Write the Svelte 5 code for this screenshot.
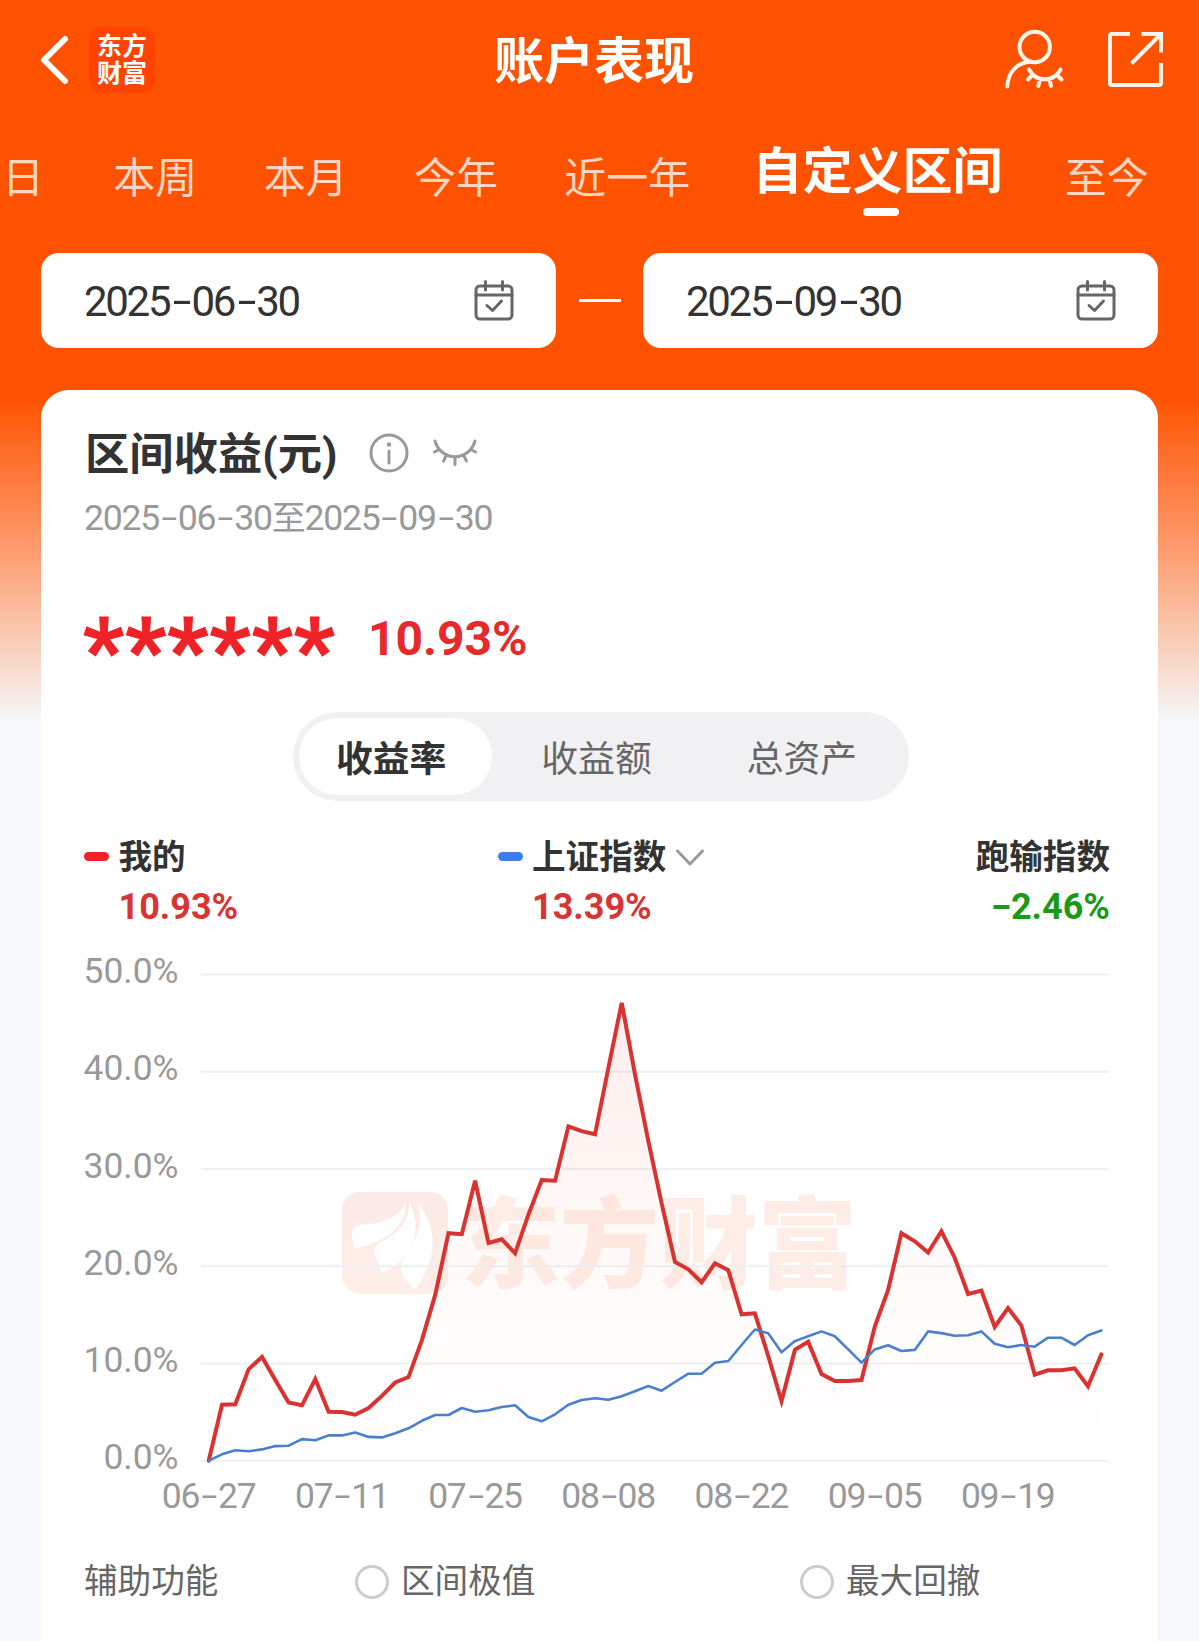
<script>
    const tabs = ["日", "本周", "本月", "今年", "近一年", "自定义区间", "至今"];
    const modes = ["收益率", "收益额", "总资产"];
    const options = ["区间极值", "最大回撤"];
    const dateLabels = ["06-27", "07-11", "07-25", "08-08", "08-22", "09-05", "09-19"];
    const levels = [50, 40, 30, 20, 10, 0];

    let activeTab = $state("自定义区间");
    let activeMode = $state("收益率");

    const mine = [
        0, 5.76, 5.8, 9.42, 10.67, 8.3, 6, 5.7, 8.4, 5.04, 5, 4.73, 5.42, 6.67, 8.04, 8.6, 12.4,
        17.05, 23.4, 23.3, 28.8, 22.4, 22.77, 21.33, 25.3, 28.87, 28.8, 34.4, 33.9, 33.57, 40.4,
        47.1, 39.75, 32.9, 26.5, 20.44, 19.69, 18.35, 20.3, 19.6, 15.06, 15.16, 10.77, 6.14, 11.4,
        12.24, 8.92, 8.2, 8.2, 8.3, 13.8, 17.56, 23.4, 22.57, 21.4, 23.6, 20.88, 17.15, 17.5,
        13.75, 15.7, 13.93, 8.85, 9.3, 9.3, 9.5, 7.65, 10.93,
    ];
    const index = [
        0, 0.66, 1.08, 0.97, 1.16, 1.5, 1.54, 2.22, 2.1, 2.6, 2.6, 2.9, 2.45, 2.4, 2.83, 3.33, 4.1,
        4.7, 4.7, 5.42, 5.04, 5.18, 5.52, 5.7, 4.5, 4.05, 4.77, 5.76, 6.24, 6.42, 6.27, 6.62, 7.14,
        7.68, 7.2, 8.1, 8.95, 8.95, 10.08, 10.25, 11.9, 13.5, 13.1, 11.15, 12.3, 12.8, 13.3, 12.8,
        11.45, 10.08, 11.45, 11.87, 11.28, 11.4, 13.3, 13.13, 12.86, 12.9, 13.3, 12.03, 11.66,
        11.9, 11.73, 12.65, 12.65, 11.9, 12.9, 13.39,
    ];

    const x = (i) => 123.7 + i * 13.322;
    const y = (v) => 521.7 - v * 9.722;
    const toPoints = (data) => data.map((v, i) => `${x(i).toFixed(1)},${y(v).toFixed(1)}`).join(" ");
    const minePoints = toPoints(mine);
    const indexPoints = toPoints(index);
    const areaPoints = `${x(0)},${y(0)} ${minePoints} ${x(mine.length - 1)},${y(0)}`;
</script>

{#snippet date(value)}
    {#each value.split("-") as part, i}{#if i}<span class="dash">-</span>{/if}{part}{/each}
{/snippet}

{#snippet picker(value)}
    <div class="picker">
        <span class="picker__value">{@render date(value)}</span>
        <svg width="42" height="42" viewBox="0 0 42 42" class="stroke">
            <rect x="3" y="6" width="36" height="33" rx="4" />
            <path d="M3 15H39M12.5 1.5V10M29.500 1.500V10M14 25.500L19.500 30.500L28.500 21" />
        </svg>
    </div>
{/snippet}

<div class="page">
    <header>
        <svg class="back" width="30" height="52" viewBox="0 0 30 52">
            <path d="M25 5L4 26L25 47" />
        </svg>
        <div class="brand">东方<br />财富</div>
        <h1>账户表现</h1>
        <svg class="user" width="62" height="62" viewBox="0 0 62 62">
            <circle cx="31.700" cy="18" r="15.200" />
            <path d="M4.300 57.500C5 43 14 33.500 28 32.500" />
            <path d="M26 40.500C33 53.500 50.500 53.500 57.500 40.500M29.500 46L25 50.500M37 50L35.300 57M46.500 50L48 57M54 46L58.500 50.500" />
        </svg>
        <svg class="share" width="60" height="60" viewBox="0 0 60 60">
            <path d="M25 4H7Q5 4 5 6V53Q5 55 7 55H54Q56 55 56 53V33M36.500 4H56V22.500M56 4L26.500 33.500" />
        </svg>
    </header>

    <nav>
        {#each tabs as tab}
            <button class="tab" class:active={tab === activeTab} onclick={() => (activeTab = tab)}>{tab}</button>
        {/each}
    </nav>

    <div class="range">
        {@render picker("2025-06-30")}
        <i class="range__line"></i>
        {@render picker("2025-09-30")}
    </div>

    <section class="card">
        <div class="title">
            <h2>区间收益(元)</h2>
            <svg class="info" width="42" height="42" viewBox="0 0 42 42">
                <circle cx="21" cy="21" r="18" />
                <path d="M21 19V31" />
                <circle class="dot" cx="21" cy="12.500" r="2.200" />
            </svg>
            <svg class="eye" width="46" height="30" viewBox="0 0 46 30">
                <path d="M3 3C9 24 37 24 43 3M7 11.500L2.500 14M14 18L11.500 23M23 20V26.500M32 18L34.500 23M39 11.500L43.500 14" />
            </svg>
        </div>
        <div class="period">{@render date("2025-06-30")}<span class="to">至</span>{@render date("2025-09-30")}</div>

        <div class="amount">
            <span class="amount__hidden">******</span>
            <span class="amount__rate">10.93%</span>
        </div>

        <div class="modes">
            {#each modes as mode}
                <button class="mode" class:active={mode === activeMode} onclick={() => (activeMode = mode)}>{mode}</button>
            {/each}
        </div>

        <div class="legend">
            <div class="legend__item">
                <i class="mark red"></i>
                <div>
                    <div class="legend__name">我的</div>
                    <div class="legend__value up">10.93%</div>
                </div>
            </div>
            <div class="legend__item">
                <i class="mark blue"></i>
                <div>
                    <div class="legend__name">
                        上证指数
                        <svg class="chevron" width="30" height="20" viewBox="0 0 30 20"><path d="M2.500 3L15 16L27.500 3" /></svg>
                    </div>
                    <div class="legend__value up">13.39%</div>
                </div>
            </div>
            <div class="legend__item right">
                <div>
                    <div class="legend__name">跑输指数</div>
                    <div class="legend__value down"><span class="dash">-</span>2.46%</div>
                </div>
            </div>
        </div>

        <svg class="chart" width="1036" height="540" viewBox="-11 0 1036 540">
            <defs>
                <linearGradient id="area" x1="0" y1="0" x2="0" y2="1">
                    <stop offset="0" stop-color="#f5322d" stop-opacity="0.09" />
                    <stop offset="0.600" stop-color="#f5522d" stop-opacity="0.025" />
                    <stop offset="1" stop-color="#f5522d" stop-opacity="0" />
                </linearGradient>
                <linearGradient id="badge" x1="0" y1="0" x2="0" y2="1">
                    <stop offset="0" stop-color="#fde9e7" />
                    <stop offset="1" stop-color="#fdeee8" />
                </linearGradient>
            </defs>
            <g class="watermark">
                <rect x="257" y="253" width="106" height="102" rx="18" fill="url(#badge)" />
                <path d="M321 264C310 283 292 285 272 286Q267 288 267 298Q267 305 270 309C292 305 321 293 321 264Z" />
                <path d="M324 262C326 291 299 300 291 307Q288 310 290 317L297 334C322 324 341 295 324 262Z" />
                <path d="M332 264C344 293 317 317 316 327C315 336 324 345 329 351C346 331 359 293 332 264Z" />
                <text x="376" y="341">东方财富</text>
            </g>
            {#each levels as level}
                <line class="grid" x1="117" x2="1023" y1={y(level)} y2={y(level)} />
                <text class="level" x="93.500" y={y(level) + 8.5}>{level.toFixed(1)}%</text>
            {/each}
            <polygon points={areaPoints} fill="url(#area)" />
            <polyline class="mine" points={minePoints} />
            <polyline class="index" points={indexPoints} />
        </svg>
        <div class="dates">
            {#each dateLabels as label}
                <span>{@render date(label)}</span>
            {/each}
        </div>

        <div class="tools">
            <span class="tools__name">辅助功能</span>
            {#each options as option}
                <label class="tools__option"><i class="radio"></i><span>{option}</span></label>
            {/each}
        </div>
    </section>
</div>

<style>
    :global(body) {
        background: #f6f8fb;
    }

    .page {
        width: 1199px;
        height: 1641px;
        overflow: hidden;
        background: linear-gradient(
            #ff5200 0,
            #ff5200 395px,
            #fd9d70 553px,
            #f8ccb5 640px,
            #f6eeec 705px,
            #f6f8fb 722px
        );
        font-family: Roboto, "Noto Sans CJK SC", sans-serif;
        color: #333;
    }

    svg {
        display: block;
        flex: none;
        fill: none;
        stroke-linecap: round;
        stroke-linejoin: round;
    }

    h1,
    h2 {
        margin: 0;
        font-weight: 700;
    }

    button {
        border: 0;
        padding: 0;
        background: none;
        font-family: inherit;
        color: inherit;
        white-space: nowrap;
    }

    .dash {
        display: inline-block;
        width: 0.53em;
        text-align: center;
        transform: translateY(-0.03em) scaleX(1.6);
    }

    header {
        display: flex;
        align-items: center;
        box-sizing: border-box;
        height: 120px;
        padding: 0 34px 0 40px;
        color: #fff;
    }

    .back {
        stroke: #fff;
        stroke-width: 6;
    }

    .brand {
        box-sizing: border-box;
        width: 66px;
        height: 66px;
        margin-left: 19px;
        padding-top: 6px;
        border-radius: 14px;
        background: #ff4303;
        font-size: 25px;
        line-height: 27px;
        font-weight: 700;
        text-align: center;
    }

    h1 {
        margin-left: 339px;
        padding-top: 4px;
        font-size: 50px;
        line-height: 60px;
    }

    .user {
        margin-left: auto;
        stroke: #fff4ec;
        stroke-width: 4;
    }

    .share {
        margin-left: 40px;
        stroke: #fff4ec;
        stroke-width: 4;
        stroke-linecap: butt;
        stroke-linejoin: miter;
    }

    nav {
        display: flex;
        align-items: flex-start;
        gap: 66.3px;
        height: 133px;
        padding-left: 2px;
    }

    .tab {
        margin-top: 29px;
        font-size: 42px;
        line-height: 60px;
        color: #ffd6c2;
    }

    .tab:first-child {
        margin-right: 3px;
    }

    .tab.active {
        display: flex;
        flex-direction: column;
        align-items: center;
        margin: 22px -4px 0;
        font-size: 50px;
        font-weight: 700;
        color: #fff;
    }

    .tab.active::after {
        content: "";
        width: 36px;
        height: 8px;
        margin: 6px 0 0 7px;
        border-radius: 4px;
        background: #fff;
    }

    .range {
        display: flex;
        align-items: center;
        justify-content: space-between;
        margin: 0 41px;
    }

    .range__line {
        width: 42px;
        height: 3px;
        background: #fff;
    }

    .picker {
        display: flex;
        align-items: center;
        justify-content: space-between;
        box-sizing: border-box;
        width: 515px;
        height: 95px;
        padding: 0 41px 0 43px;
        border-radius: 18px;
        background: #fff;
    }

    .picker__value {
        padding-top: 2px;
        font-size: 42px;
        letter-spacing: -0.055em;
    }

    .stroke {
        stroke: #666;
        stroke-width: 3;
    }

    .card {
        box-sizing: border-box;
        height: 1300px;
        margin: 42px 41px 0;
        padding: 35px 48px 0 43px;
        border-radius: 28px;
        background: #fff;
    }

    .title {
        display: flex;
        align-items: center;
        height: 56px;
    }

    h2 {
        padding: 3px 0 0 1px;
        font-size: 44.3px;
        line-height: 56px;
    }

    .info {
        margin-left: 30px;
        stroke: #999;
        stroke-width: 3;
    }

    .info .dot {
        fill: #999;
        stroke: none;
    }

    .eye {
        margin-left: 22px;
        stroke: #999;
        stroke-width: 3;
    }

    .period {
        margin-top: 12px;
        font-size: 35.6px;
        line-height: 50px;
        letter-spacing: -0.035em;
        color: #999;
    }

    .to {
        font-size: 34px;
    }

    .amount {
        display: flex;
        align-items: center;
        height: 80px;
        margin-top: 55px;
        font-weight: 700;
        color: #e62a2c;
    }

    .amount__hidden {
        width: 285px;
        margin-left: -1px;
        padding-top: 28px;
        font-size: 90px;
        line-height: 80px;
        letter-spacing: 1.3px;
        color: #ee2227;
        -webkit-text-stroke: 1px #ee2227;
    }

    .amount__rate {
        font-size: 48px;
    }

    .modes {
        display: flex;
        width: 616px;
        height: 89px;
        margin: 34px 0 0 209px;
        border-radius: 45px;
        background: #f1f1f4;
    }

    .mode {
        flex: 1;
        margin: 6px;
        padding: 0 9px 2px 0;
        border-radius: 39px;
        font-size: 36.8px;
        color: #666;
    }

    .mode.active {
        background: #fff;
        font-weight: 700;
        color: #333;
    }

    .legend {
        display: grid;
        grid-template-columns: 413.5px 1fr auto;
        margin-top: 31px;
        line-height: 50px;
    }

    .legend__item {
        display: flex;
        gap: 9.5px;
    }

    .legend__item.right {
        text-align: right;
    }

    .legend__name {
        display: flex;
        align-items: center;
        gap: 9px;
        height: 50px;
        padding-top: 1px;
        font-size: 33.6px;
        font-weight: 700;
    }

    .legend__value {
        margin-top: -1px;
        font-size: 36px;
        font-weight: 700;
    }

    .mark {
        width: 25px;
        height: 9px;
        margin-top: 20px;
        border-radius: 5px;
    }

    .red {
        background: #ee2227;
    }

    .blue {
        background: #3d7eea;
    }

    .up {
        color: #d93434;
    }

    .down {
        color: #1a9a16;
    }

    .chevron {
        stroke: #999;
        stroke-width: 3;
    }

    .chart {
        margin: 7px 0 0 -10px;
    }

    .watermark path {
        fill: #fff;
    }

    .watermark text {
        font-size: 99px;
        font-weight: 900;
        fill: #feede6;
    }

    .grid {
        stroke: #edf0f2;
        stroke-width: 2;
    }

    .level {
        font-size: 35.4px;
        text-anchor: end;
        fill: #999;
    }

    .mine {
        stroke: #d93230;
        stroke-width: 4;
        stroke-linejoin: miter;
    }

    .index {
        stroke: #4a7fcb;
        stroke-width: 2.6;
    }

    .dates {
        display: grid;
        grid-template-columns: repeat(7, 133.2px);
        margin: -3px 0 0 58px;
        font-size: 35.5px;
        line-height: 40px;
        letter-spacing: -0.035em;
        text-align: center;
        color: #999;
    }

    .tools {
        display: grid;
        grid-template-columns: 271px 445px auto;
        margin-top: 46px;
        font-size: 33.6px;
        line-height: 40px;
        color: #666;
    }

    .tools__option {
        display: flex;
        align-items: center;
        gap: 12px;
    }

    .radio {
        box-sizing: border-box;
        width: 34px;
        height: 34px;
        border: 3px solid #ccc;
        border-radius: 50%;
    }
</style>
